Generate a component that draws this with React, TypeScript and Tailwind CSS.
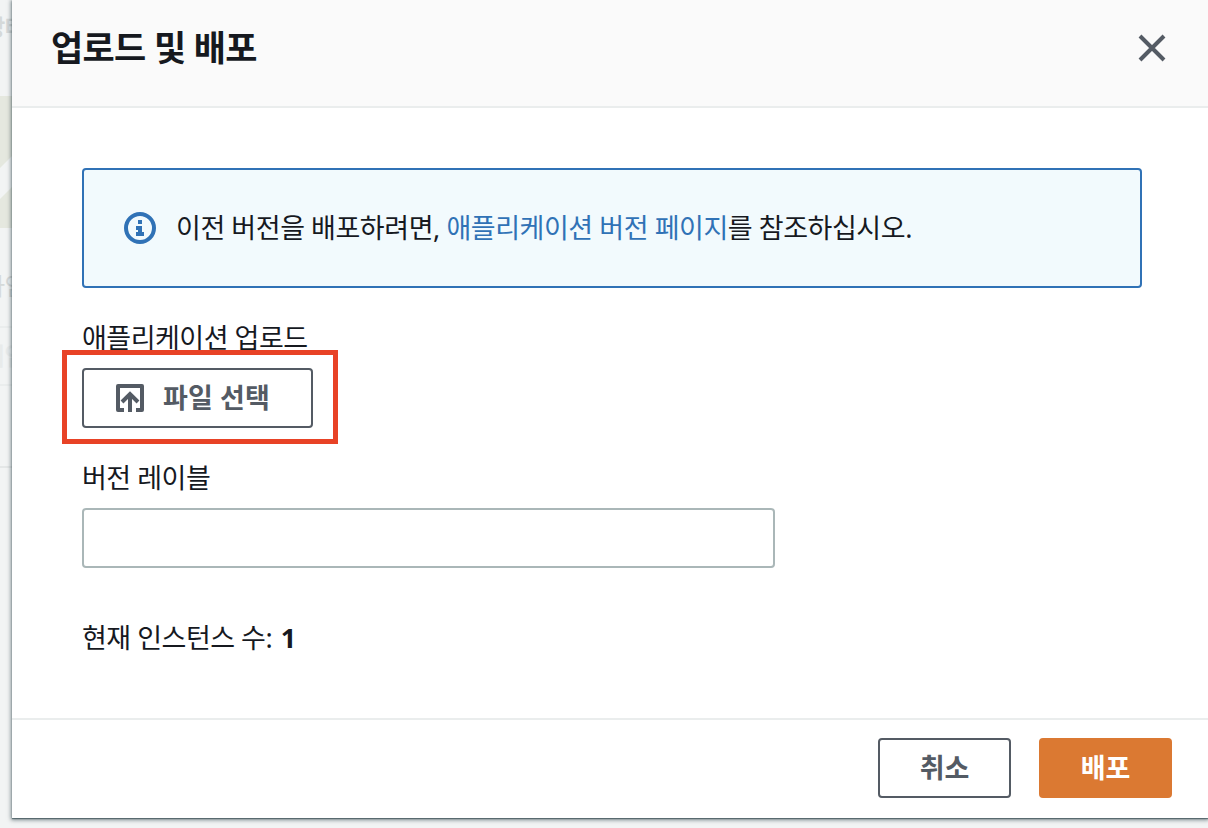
import { ReactNode } from "react";

const InfoIcon = () => (
  <svg width="32" height="32" viewBox="0 0 32 32" className="shrink-0">
    <circle cx="16" cy="16" r="14" fill="none" stroke="#3072b6" strokeWidth="4" />
    <path d="M14 8h4v4h-4zM12 14h6v6h2v4h-8v-4h2v-2h-2z" fill="#3072b6" />
  </svg>
);

const UploadIcon = () => (
  <svg width="28" height="28" viewBox="0 0 28 28" fill="none" stroke="#545b64" strokeWidth="4" className="shrink-0">
    <path d="M8 26H2V2h24v24h-6" strokeLinejoin="round" />
    <path d="M14 28V11M6 18l8-8 8 8" />
  </svg>
);

const CloseIcon = () => (
  <svg width="28" height="28" viewBox="0 0 28 28" stroke="#545b64" strokeWidth="4">
    <path d="M2 2l24 24M26 2L2 26" />
  </svg>
);

// Dimmed page that shows along the left edge of the dialog
const PageBehind = () => (
  <div className="h-full w-3 shrink-0 overflow-hidden bg-[#f2f4f4] font-bold text-[#d5d9d9]">
    <div className="flex h-24 items-start pt-3 text-[22px] leading-7">
      <span className="-ml-[15px] shrink-0">상태</span>
    </div>
    <svg width="12" height="132" viewBox="0 0 12 132">
      <rect width="12" height="132" fill="#e5e8df" />
      <path d="M0 72L12 60v31L0 103z" fill="#f2f4f4" />
    </svg>
    <div className="flex h-[100px] items-end border-b-2 border-[#eaeded] pb-6 text-[24px] font-normal leading-8">
      <span className="-ml-[17px] shrink-0">타임</span>
    </div>
    <div className="flex h-[58px] items-center border-b-2 border-[#eaeded] text-[24px] text-[#e8ebeb]">
      <span className="-ml-[17px] shrink-0">기업</span>
    </div>
    <div className="h-[82px] border-b-2 border-[#e4e7e7]" />
  </div>
);

const Button = ({ children, primary }: { children: ReactNode; primary?: boolean }) => (
  <button
    className={`flex h-[60px] w-[133px] items-center justify-center rounded-[4px] border-2 text-[27px] font-bold tracking-[-0.2px] ${
      primary ? "border-[#db7932] bg-[#db7932] text-white" : "border-[#545b64] bg-white text-[#545b64]"
    }`}
  >
    {children}
  </button>
);

export default function App() {
  return (
    <div className="flex h-[828px] w-[1208px] overflow-hidden bg-[#f2f4f4] font-['Noto_Sans','Noto_Sans_CJK_KR',sans-serif] text-[27px] leading-9 tracking-[-0.5px] text-[#16191f]">
      <PageBehind />
      <div className="relative flex h-[818px] min-w-0 flex-1 flex-col bg-white shadow-[0_1px_4px_1px_rgba(0,28,36,0.5),0_1px_1px_0_rgba(0,28,36,0.4)]">
        <header className="flex h-[108px] items-start justify-between border-b-2 border-[#eaeded] bg-[#fafafa] pl-[39px] pr-[42px]">
          <h1 className="pt-6 text-[35px] font-bold leading-[48px] tracking-[-0.7px]">업로드 및 배포</h1>
          <button className="mt-[34px]" aria-label="닫기">
            <CloseIcon />
          </button>
        </header>

        <main className="flex-1 pl-[70px] pr-[66px] pt-[60px]">
          <div className="flex h-[120px] items-center gap-5 rounded-[4px] border-2 border-[#3072b6] bg-[#f2fafd] pl-10">
            <InfoIcon />
            <p className="tracking-[-0.45px]">
              이전 버전을 배포하려면, <a className="text-[#3072b6]">애플리케이션 버전 페이지</a>를 참조하십시오.
            </p>
          </div>

          <div className="mt-8">애플리케이션 업로드</div>
          <div className="relative z-10 -ml-5 -mt-1.5 h-[94px] w-[276px] border-[5px] border-[#e84226] pl-[15px] pt-[13px]">
            <button className="flex h-[60px] w-[231px] items-center gap-[19px] rounded-[4px] border-2 border-[#545b64] bg-white pl-8 font-bold text-[#545b64]">
              <UploadIcon />
              <span className="tracking-[0.1px]">파일 선택</span>
            </button>
          </div>

          <label className="mt-4 block" htmlFor="version-label">버전 레이블</label>
          <input
            id="version-label"
            className="mt-3 block h-[60px] w-[693px] rounded-[4px] border-2 border-[#aab7b8] bg-white px-4 outline-none"
          />

          <p className="mt-[52px]">
            현재 인스턴스 수: <b className="ml-0.5">1</b>
          </p>
        </main>

        <footer className="flex h-[100px] items-start justify-end gap-7 border-t-2 border-[#eaeded] pr-9 pt-[18px]">
          <Button>취소</Button>
          <Button primary>배포</Button>
        </footer>
      </div>
    </div>
  );
}
